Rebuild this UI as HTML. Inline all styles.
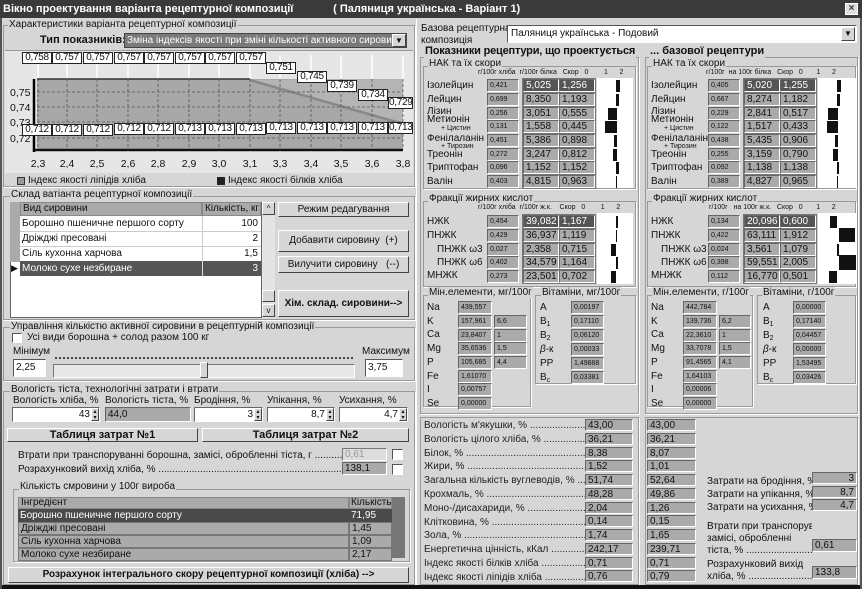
<!DOCTYPE html>
<html><head><meta charset="utf-8"><style>
*{box-sizing:border-box;margin:0;padding:0}
body{width:862px;height:589px;background:#d6d6d6;font-family:"Liberation Sans","DejaVu Sans",sans-serif;font-size:10px;color:#111;position:relative;overflow:hidden}
div,span{position:absolute;white-space:nowrap}
sub{font-size:7px;line-height:0;vertical-align:-2px}
.g{border:1px solid #999;box-shadow:1px 1px 0 #fff}
.gt{background:#d6d6d6;padding:0 1px;line-height:11px}
.f{background:#aaa;border:1px solid;border-color:#666 #fff #fff #666;line-height:11px;padding-left:2px;overflow:hidden}
.s{font-size:7px;line-height:11px}
.d{background:#555;color:#fff}
.w{background:#fff;border:1px solid;border-color:#666 #fff #fff #666;text-align:right;padding-right:9px;line-height:13px}
.b{background:#d6d6d6;border:1px solid;border-color:#fff #444 #444 #fff;text-align:center}
.bb{font-weight:bold}
.lb{background:#fff;border:1px solid #222;font-size:10px;line-height:10px;width:30px;height:12px;text-align:center;letter-spacing:-0.3px}
.bar{background:#111}
.dots{overflow:hidden}
</style></head><body>
<!-- title -->
<div style="left:0;top:0;width:862px;height:18px;background:#3a3a3a;color:#fff;font-weight:bold;font-size:11px;line-height:18px;padding-left:3px">Вікно проектування варіанта рецептурної композиції&nbsp;&nbsp;&nbsp;&nbsp;&nbsp;&nbsp;&nbsp;&nbsp;&nbsp;&nbsp;&nbsp;&nbsp;&nbsp;( Паляниця українська - Варіант 1)</div>
<div style="left:845px;top:3px;width:13px;height:12px;background:#ddd;border:1px solid #fff;color:#333;font-size:10px;line-height:10px;text-align:center;font-weight:bold">×</div>

<!-- LEFT: chart group -->
<div class="g" style="left:3px;top:25px;width:412px;height:162px"></div>
<div class="gt" style="left:8px;top:19px">Характеристики варіанта рецептурної композиції</div>
<div class="bb" style="left:40px;top:34px;font-size:11px">Тип показників:</div>
<div style="left:124px;top:33px;width:283px;height:15px;background:#7a7a7a;border:1px solid #444;color:#fff;line-height:13px;padding-left:2px;overflow:hidden">Зміна індексів якості при зміні кількості активного сировини 0</div>
<div class="b" style="left:392px;top:34px;width:14px;height:13px;font-size:8px;line-height:11px">▼</div>
<div style="left:5px;top:50px;width:408px;height:123px;background:#e6e6e6;border-top:1px solid #999"></div>
<svg style="position:absolute;left:0;top:0" width="420" height="180">
<g stroke="#fff" stroke-width="1.5">
<line x1="38" y1="55" x2="38" y2="152"/><line x1="67" y1="55" x2="67" y2="152"/><line x1="97" y1="55" x2="97" y2="152"/><line x1="128" y1="55" x2="128" y2="152"/><line x1="158" y1="55" x2="158" y2="152"/><line x1="189" y1="55" x2="189" y2="152"/><line x1="219" y1="55" x2="219" y2="152"/><line x1="250" y1="55" x2="250" y2="152"/><line x1="280" y1="55" x2="280" y2="152"/><line x1="311" y1="55" x2="311" y2="152"/><line x1="341" y1="55" x2="341" y2="152"/><line x1="372" y1="55" x2="372" y2="152"/><line x1="403" y1="55" x2="403" y2="152"/></g>
<rect x="37" y="79" width="366" height="71" fill="#a8a8a8"/>
<polygon points="250,80 403,122 403,79" fill="#b4b4b4"/>
<line x1="37" y1="79" x2="250" y2="79" stroke="#333" stroke-width="1.5"/>
<line x1="250" y1="80" x2="403" y2="124" stroke="#888" stroke-width="2.5"/>
<g stroke="#555" stroke-dasharray="3,2" stroke-width="0.8">
<line x1="37" y1="92" x2="403" y2="92"/><line x1="37" y1="107" x2="403" y2="107"/><line x1="37" y1="122" x2="403" y2="122"/><line x1="37" y1="138" x2="403" y2="138"/>
<line x1="38" y1="79" x2="38" y2="150"/><line x1="67" y1="79" x2="67" y2="150"/><line x1="97" y1="79" x2="97" y2="150"/><line x1="128" y1="79" x2="128" y2="150"/><line x1="158" y1="79" x2="158" y2="150"/><line x1="189" y1="79" x2="189" y2="150"/><line x1="219" y1="79" x2="219" y2="150"/><line x1="250" y1="79" x2="250" y2="150"/><line x1="280" y1="79" x2="280" y2="150"/><line x1="311" y1="79" x2="311" y2="150"/><line x1="341" y1="79" x2="341" y2="150"/><line x1="372" y1="79" x2="372" y2="150"/><line x1="403" y1="79" x2="403" y2="150"/></g>
<line x1="34" y1="79" x2="34" y2="152" stroke="#000" stroke-width="2.5"/>
<line x1="34" y1="150" x2="403" y2="150" stroke="#111" stroke-width="2.5"/>
<g font-family="Liberation Sans" font-size="10.5" fill="#111">
<text x="10" y="96">0,75</text><text x="10" y="111">0,74</text><text x="10" y="126">0,73</text><text x="10" y="142">0,72</text>
<g text-anchor="middle"><text x="38" y="167">2,3</text><text x="67" y="167">2,4</text><text x="97" y="167">2,5</text><text x="128" y="167">2,6</text><text x="158" y="167">2,8</text><text x="189" y="167">2,9</text><text x="219" y="167">3,0</text><text x="250" y="167">3,1</text><text x="280" y="167">3,3</text><text x="311" y="167">3,4</text><text x="341" y="167">3,5</text><text x="372" y="167">3,6</text><text x="403" y="167">3,8</text></g></g>
</svg>
<div class="lb" style="left:22px;top:52px">0,758</div><div class="lb" style="left:52px;top:52px">0,757</div><div class="lb" style="left:83px;top:52px">0,757</div><div class="lb" style="left:114px;top:52px">0,757</div><div class="lb" style="left:144px;top:52px">0,757</div><div class="lb" style="left:175px;top:52px">0,757</div><div class="lb" style="left:205px;top:52px">0,757</div><div class="lb" style="left:236px;top:52px">0,757</div>
<div class="lb" style="left:266px;top:62px">0,751</div><div class="lb" style="left:297px;top:71px">0,745</div><div class="lb" style="left:327px;top:80px">0,739</div><div class="lb" style="left:358px;top:89px">0,734</div><div class="lb" style="left:388px;top:97px;width:25px;overflow:hidden">0,729</div>
<div class="lb" style="left:22px;top:124px">0,712</div><div class="lb" style="left:52px;top:124px">0,712</div><div class="lb" style="left:83px;top:124px">0,712</div><div class="lb" style="left:114px;top:123px">0,712</div><div class="lb" style="left:144px;top:123px">0,712</div><div class="lb" style="left:175px;top:123px">0,713</div><div class="lb" style="left:205px;top:123px">0,713</div><div class="lb" style="left:236px;top:123px">0,713</div><div class="lb" style="left:266px;top:122px">0,713</div><div class="lb" style="left:297px;top:122px">0,713</div><div class="lb" style="left:327px;top:122px">0,713</div><div class="lb" style="left:358px;top:122px">0,713</div><div class="lb" style="left:388px;top:122px;width:25px;overflow:hidden">0,713</div>
<div style="left:17px;top:177px;width:8px;height:8px;background:#999;border:1px solid #333"></div>
<div style="left:28px;top:175px">Індекс якості лiпідів хліба</div>
<div style="left:217px;top:177px;width:8px;height:8px;background:#222"></div>
<div style="left:228px;top:175px">Індекс якості білків хліба</div>

<!-- Склад -->
<div class="g" style="left:3px;top:196px;width:412px;height:124px"></div>
<div class="gt" style="left:10px;top:189px">Склад ватіанта рецептурної композиції</div>
<div style="left:10px;top:202px;width:252px;height:116px;background:#fff;border:1px solid #666"></div>
<div style="left:10px;top:202px;width:10px;height:60px;background:#aaa"></div>
<div style="left:20px;top:202px;width:182px;height:14px;background:#aaa;border:1px solid #888;padding-left:2px;line-height:12px">Вид сировини</div>
<div style="left:202px;top:202px;width:59px;height:14px;background:#aaa;border:1px solid #888;padding-left:2px;line-height:12px;overflow:hidden">Кількість, кг</div>
<div style="left:22px;top:216px;line-height:15px">Борошно пшеничне першого сорту</div><div style="left:202px;top:216px;width:56px;text-align:right;line-height:15px">100</div>
<div style="left:20px;top:231px;width:241px;border-top:1px solid #ccc"></div>
<div style="left:22px;top:231px;line-height:15px">Дріжджі пресовані</div><div style="left:202px;top:231px;width:56px;text-align:right;line-height:15px">2</div>
<div style="left:20px;top:246px;width:241px;border-top:1px solid #ccc"></div>
<div style="left:22px;top:246px;line-height:15px">Сіль кухонна харчова</div><div style="left:202px;top:246px;width:56px;text-align:right;line-height:15px">1,5</div>
<div style="left:202px;top:216px;height:46px;border-left:1px solid #ccc"></div>
<div style="left:11px;top:261px;width:9px;height:15px;font-size:9px;line-height:15px">▶</div>
<div class="d" style="left:20px;top:261px;width:182px;height:15px;line-height:15px;padding-left:2px">Молоко сухе незбиране</div>
<div class="d" style="left:202px;top:261px;width:59px;height:15px;line-height:15px;text-align:right;padding-right:3px;border-left:1px solid #ddd">3</div>
<div style="left:262px;top:202px;width:13px;height:116px;background:#e4e4e4"></div>
<div class="b" style="left:262px;top:202px;width:13px;height:13px;font-size:8px;line-height:11px">^</div>
<div class="b" style="left:262px;top:290px;width:13px;height:12px"></div>
<div class="b" style="left:262px;top:304px;width:13px;height:13px;font-size:8px;line-height:11px">v</div>
<div class="b" style="left:278px;top:202px;width:131px;height:15px;line-height:13px">Режим редагування</div>
<div class="b" style="left:278px;top:230px;width:131px;height:22px;line-height:20px">Добавити сировину&nbsp; (+)</div>
<div class="b" style="left:278px;top:256px;width:131px;height:17px;line-height:15px">Вилучити сировину&nbsp;&nbsp; (--)</div>
<div class="b bb" style="left:278px;top:290px;width:131px;height:27px;line-height:25px">Хім. склад. сировини--&gt;</div>

<!-- Управління -->
<div class="g" style="left:3px;top:327px;width:412px;height:54px"></div>
<div class="gt" style="left:10px;top:321px">Управління кількістю активної сировини в рецептурній композиції</div>
<div style="left:12px;top:333px;width:10px;height:10px;background:#fff;border:1px solid;border-color:#555 #fff #fff #555"></div>
<div style="left:27px;top:332px">Усі види борошна + солод разом 100 кг</div>
<div style="left:13px;top:346px">Мінімум</div>
<div style="left:362px;top:346px">Максимум</div>
<div style="left:13px;top:359px;width:33px;height:18px;background:#fff;border:1px solid;border-color:#555 #fff #fff #555;line-height:15px;padding-left:2px">2,25</div>
<div style="left:365px;top:359px;width:38px;height:18px;background:#fff;border:1px solid;border-color:#555 #fff #fff #555;line-height:15px;padding-left:2px">3,75</div>
<div style="left:55px;top:357px;width:298px;border-top:2px dotted #444"></div>
<div style="left:53px;top:364px;width:302px;height:14px;background:#e8e8e8;border:1px solid;border-color:#777 #fff #fff #777"></div>
<div class="b" style="left:200px;top:362px;width:8px;height:16px"></div>

<!-- Вологість -->
<div class="g" style="left:3px;top:391px;width:412px;height:194px"></div>
<div class="gt" style="left:10px;top:384px">Вологість тіста, технологічні затрати і втрати</div>
<div style="left:13px;top:395px">Вологість хліба, %</div><div style="left:105px;top:395px">Вологість тіста, %</div><div style="left:194px;top:395px">Бродіння, %</div><div style="left:267px;top:395px">Упікання, %</div><div style="left:339px;top:395px">Усихання, %</div>
<div class="w" style="left:12px;top:407px;width:88px;height:15px">43</div>
<div class="f" style="left:105px;top:407px;width:86px;height:15px;line-height:13px">44,0</div>
<div class="w" style="left:194px;top:407px;width:69px;height:15px">3</div>
<div class="w" style="left:267px;top:407px;width:68px;height:15px">8,7</div>
<div class="w" style="left:339px;top:407px;width:69px;height:15px">4,7</div>
<div class="b" style="left:91px;top:408px;width:8px;height:13px;font-size:6px;line-height:6px">▴<br>▾</div>
<div class="b" style="left:254px;top:408px;width:8px;height:13px;font-size:6px;line-height:6px">▴<br>▾</div>
<div class="b" style="left:326px;top:408px;width:8px;height:13px;font-size:6px;line-height:6px">▴<br>▾</div>
<div class="b" style="left:399px;top:408px;width:8px;height:13px;font-size:6px;line-height:6px">▴<br>▾</div>
<div class="b bb" style="left:7px;top:428px;width:191px;height:14px;line-height:12px;font-size:11px">Таблиця затрат №1</div>
<div class="b bb" style="left:202px;top:428px;width:207px;height:14px;line-height:12px;font-size:11px">Таблиця затрат №2</div>
<div class="dots" style="left:18px;top:450px;width:324px">Втрати при транспоруванні борошна, замісі, обробленні тіста, г ..........................................</div>
<div style="left:342px;top:448px;width:45px;height:13px;background:#ddd;border:1px solid;border-color:#777 #fff #fff #777;color:#999;line-height:11px;padding-left:2px">0,61</div>
<div style="left:392px;top:449px;width:11px;height:11px;background:#fff;border:1px solid;border-color:#555 #fff #fff #555"></div>
<div class="dots" style="left:18px;top:464px;width:324px">Розрахунковий вихід хліба, % .........................................................................................</div>
<div class="f" style="left:342px;top:462px;width:45px;height:13px">138,1</div>
<div style="left:392px;top:464px;width:11px;height:11px;background:#fff;border:1px solid;border-color:#555 #fff #fff #555"></div>
<div class="g" style="left:13px;top:489px;width:397px;height:73px"></div>
<div class="gt" style="left:19px;top:481px">Кількість смровини у 100г вироба</div>
<div style="left:18px;top:497px;width:387px;height:61px;background:#777"></div>
<div style="left:18px;top:497px;width:331px;height:12px;background:#aaa;border:1px solid #888;line-height:10px;padding-left:2px">Інгредієнт</div>
<div style="left:349px;top:497px;width:43px;height:12px;background:#aaa;border:1px solid #888;line-height:10px;padding-left:1px;overflow:hidden">Кількість</div>
<div class="d" style="left:18px;top:509px;width:331px;height:13px;line-height:13px;padding-left:2px;background:#4a4a4a">Борошно пшеничне першого сорту</div>
<div class="d" style="left:349px;top:509px;width:43px;height:13px;line-height:13px;padding-left:2px;background:#4a4a4a">71,95</div>
<div style="left:18px;top:522px;width:331px;height:13px;line-height:12px;padding-left:2px;background:#aaa;border:1px solid #777">Дріжджі пресовані</div><div style="left:349px;top:522px;width:43px;height:13px;line-height:12px;padding-left:2px;background:#aaa;border:1px solid #777">1,45</div>
<div style="left:18px;top:535px;width:331px;height:13px;line-height:12px;padding-left:2px;background:#aaa;border:1px solid #777">Сіль кухонна харчова</div><div style="left:349px;top:535px;width:43px;height:13px;line-height:12px;padding-left:2px;background:#aaa;border:1px solid #777">1,09</div>
<div style="left:18px;top:548px;width:331px;height:13px;line-height:12px;padding-left:2px;background:#aaa;border:1px solid #777">Молоко сухе незбиране</div><div style="left:349px;top:548px;width:43px;height:13px;line-height:12px;padding-left:2px;background:#aaa;border:1px solid #777">2,17</div>
<div class="b bb" style="left:8px;top:567px;width:401px;height:16px;line-height:14px">Розрахунок інтегрального скору рецептурної композиції (хліба) --&gt;</div>

<!-- RIGHT top -->
<div style="left:416px;top:19px;height:570px;border-left:1px solid #fff"></div>
<div style="left:421px;top:23px;line-height:12px">Базова рецептурна<br>композиція</div>
<div style="left:507px;top:25px;width:350px;height:18px;background:#fff;border:1px solid;border-color:#555 #fff #fff #555;line-height:15px;padding-left:3px">Паляниця українська - Подовий</div>
<div class="b" style="left:841px;top:27px;width:14px;height:14px;font-size:8px;line-height:12px">▼</div>
<div class="g" style="left:420px;top:57px;width:219px;height:357px"></div>
<div class="g" style="left:645px;top:57px;width:213px;height:357px"></div>
<div class="gt bb" style="left:424px;top:45px;font-size:11px;line-height:13px;letter-spacing:-0.2px">Показники рецептури, що проектується</div>
<div class="gt bb" style="left:649px;top:45px;font-size:11px;line-height:13px">... базової рецептури</div>

<!-- NAK left -->
<div class="g" style="left:423px;top:66px;width:213px;height:123px"></div>
<div class="gt" style="left:428px;top:58px">НАК та їх скори</div>
<div class="s" style="left:478px;top:67px">г/100г хліба&nbsp; г/100г білка&nbsp;&nbsp; Скор&nbsp;&nbsp; 0&nbsp;&nbsp;&nbsp;&nbsp;&nbsp;&nbsp;&nbsp; 1&nbsp;&nbsp;&nbsp;&nbsp;&nbsp; 2</div>
<div class="g" style="left:647px;top:66px;width:209px;height:123px"></div>
<div class="gt" style="left:652px;top:58px">НАК та їх скори</div>
<div class="s" style="left:706px;top:67px">г/100г&nbsp; на 100г білка&nbsp;&nbsp; Скор&nbsp;&nbsp; 0&nbsp;&nbsp;&nbsp;&nbsp;&nbsp;&nbsp; 1&nbsp;&nbsp;&nbsp;&nbsp;&nbsp; 2</div>
<div style="left:597px;top:78px;width:36px;height:110px;background:#fff"></div>
<div style="left:818px;top:78px;width:38px;height:110px;background:#fff"></div>

<div style="left:427px;top:79px;line-height:13px">Ізолейцин</div>
<div style="left:427px;top:93px;line-height:13px">Лейцин</div>
<div style="left:427px;top:106px;line-height:12px">Лізин</div>
<div style="left:427px;top:114px;line-height:12px">Метионін</div>
<div style="left:441px;top:124px;font-size:7px;line-height:10px">+ Цистин</div>
<div style="left:427px;top:133px;line-height:12px">Фенілаланін</div>
<div style="left:441px;top:142px;font-size:7px;line-height:10px">+ Тирозин</div>
<div style="left:427px;top:148px;line-height:13px">Треонін</div>
<div style="left:427px;top:161px;line-height:13px">Триптофан</div>
<div style="left:427px;top:175px;line-height:13px">Валін</div>

<div style="left:651px;top:79px;line-height:13px">Ізолейцин</div>
<div style="left:651px;top:93px;line-height:13px">Лейцин</div>
<div style="left:651px;top:106px;line-height:12px">Лізин</div>
<div style="left:651px;top:114px;line-height:12px">Метионін</div>
<div style="left:664px;top:124px;font-size:7px;line-height:10px">+ Цистин</div>
<div style="left:651px;top:133px;line-height:12px">Фенілаланін</div>
<div style="left:664px;top:142px;font-size:7px;line-height:10px">+ Тирозин</div>
<div style="left:651px;top:148px;line-height:13px">Треонін</div>
<div style="left:651px;top:161px;line-height:13px">Триптофан</div>
<div style="left:651px;top:175px;line-height:13px">Валін</div>

<div class="f s" style="left:487px;top:79px;width:32px;height:13px">0,421</div>
<div class="f s" style="left:487px;top:93px;width:32px;height:13px">0,699</div>
<div class="f s" style="left:487px;top:107px;width:32px;height:13px">0,256</div>
<div class="f s" style="left:487px;top:120px;width:32px;height:13px">0,131</div>
<div class="f s" style="left:487px;top:134px;width:32px;height:13px">0,451</div>
<div class="f s" style="left:487px;top:148px;width:32px;height:13px">0,272</div>
<div class="f s" style="left:487px;top:161px;width:32px;height:13px">0,096</div>
<div class="f s" style="left:487px;top:175px;width:32px;height:13px">0,403</div>
<div style="left:522px;top:78px;width:74px;height:111px;background:#777"></div>
<div class="f d" style="left:523px;top:79px;width:36px;height:13px">5,025</div><div class="f d" style="left:559px;top:79px;width:36px;height:13px">1,256</div>
<div class="f" style="left:523px;top:93px;width:36px;height:13px">8,350</div><div class="f" style="left:559px;top:93px;width:36px;height:13px">1,193</div>
<div class="f" style="left:523px;top:107px;width:36px;height:13px">3,051</div><div class="f" style="left:559px;top:107px;width:36px;height:13px">0,555</div>
<div class="f" style="left:523px;top:120px;width:36px;height:13px">1,558</div><div class="f" style="left:559px;top:120px;width:36px;height:13px">0,445</div>
<div class="f" style="left:523px;top:134px;width:36px;height:13px">5,386</div><div class="f" style="left:559px;top:134px;width:36px;height:13px">0,898</div>
<div class="f" style="left:523px;top:148px;width:36px;height:13px">3,247</div><div class="f" style="left:559px;top:148px;width:36px;height:13px">0,812</div>
<div class="f" style="left:523px;top:161px;width:36px;height:13px">1,152</div><div class="f" style="left:559px;top:161px;width:36px;height:13px">1,152</div>
<div class="f" style="left:523px;top:175px;width:36px;height:13px">4,815</div><div class="f" style="left:559px;top:175px;width:36px;height:13px">0,963</div>
<div class="bar" style="left:616px;top:80px;width:4px;height:12px"></div>
<div class="bar" style="left:616px;top:94px;width:3px;height:12px"></div>
<div class="bar" style="left:608px;top:108px;width:9px;height:12px"></div>
<div class="bar" style="left:605px;top:121px;width:12px;height:12px"></div>
<div class="bar" style="left:614px;top:135px;width:3px;height:12px"></div>
<div class="bar" style="left:613px;top:149px;width:4px;height:12px"></div>
<div class="bar" style="left:616px;top:162px;width:3px;height:12px"></div>
<div class="bar" style="left:616px;top:176px;width:1px;height:12px"></div>
<div class="f s" style="left:708px;top:79px;width:32px;height:13px">0,405</div>
<div class="f s" style="left:708px;top:93px;width:32px;height:13px">0,667</div>
<div class="f s" style="left:708px;top:107px;width:32px;height:13px">0,229</div>
<div class="f s" style="left:708px;top:120px;width:32px;height:13px">0,122</div>
<div class="f s" style="left:708px;top:134px;width:32px;height:13px">0,438</div>
<div class="f s" style="left:708px;top:148px;width:32px;height:13px">0,255</div>
<div class="f s" style="left:708px;top:161px;width:32px;height:13px">0,092</div>
<div class="f s" style="left:708px;top:175px;width:32px;height:13px">0,389</div>
<div style="left:743px;top:78px;width:74px;height:111px;background:#777"></div>
<div class="f d" style="left:744px;top:79px;width:36px;height:13px">5,020</div><div class="f d" style="left:780px;top:79px;width:36px;height:13px">1,255</div>
<div class="f" style="left:744px;top:93px;width:36px;height:13px">8,274</div><div class="f" style="left:780px;top:93px;width:36px;height:13px">1,182</div>
<div class="f" style="left:744px;top:107px;width:36px;height:13px">2,841</div><div class="f" style="left:780px;top:107px;width:36px;height:13px">0,517</div>
<div class="f" style="left:744px;top:120px;width:36px;height:13px">1,517</div><div class="f" style="left:780px;top:120px;width:36px;height:13px">0,433</div>
<div class="f" style="left:744px;top:134px;width:36px;height:13px">5,435</div><div class="f" style="left:780px;top:134px;width:36px;height:13px">0,906</div>
<div class="f" style="left:744px;top:148px;width:36px;height:13px">3,159</div><div class="f" style="left:780px;top:148px;width:36px;height:13px">0,790</div>
<div class="f" style="left:744px;top:161px;width:36px;height:13px">1,138</div><div class="f" style="left:780px;top:161px;width:36px;height:13px">1,138</div>
<div class="f" style="left:744px;top:175px;width:36px;height:13px">4,827</div><div class="f" style="left:780px;top:175px;width:36px;height:13px">0,965</div>
<div class="bar" style="left:837px;top:80px;width:4px;height:12px"></div>
<div class="bar" style="left:837px;top:94px;width:3px;height:12px"></div>
<div class="bar" style="left:828px;top:108px;width:10px;height:12px"></div>
<div class="bar" style="left:827px;top:121px;width:11px;height:12px"></div>
<div class="bar" style="left:835px;top:135px;width:3px;height:12px"></div>
<div class="bar" style="left:833px;top:149px;width:5px;height:12px"></div>
<div class="bar" style="left:837px;top:162px;width:2px;height:12px"></div>
<div class="bar" style="left:837px;top:176px;width:1px;height:12px"></div>

<!-- Fatty acids -->
<div class="g" style="left:423px;top:201px;width:213px;height:86px"></div>
<div class="gt" style="left:428px;top:193px">Фракції жирних кислот</div>
<div class="s" style="left:478px;top:202px">г/100г хліба&nbsp; г/100г ж.к.&nbsp;&nbsp;&nbsp; Скор&nbsp;&nbsp; 0&nbsp;&nbsp;&nbsp;&nbsp;&nbsp;&nbsp;&nbsp; 1&nbsp;&nbsp;&nbsp;&nbsp;&nbsp; 2</div>
<div class="g" style="left:647px;top:201px;width:209px;height:86px"></div>
<div class="gt" style="left:652px;top:193px">Фракції жирних кислот</div>
<div class="s" style="left:709px;top:202px">г/100г&nbsp;&nbsp; на 100г ж.к.&nbsp;&nbsp; Скор&nbsp;&nbsp; 0&nbsp;&nbsp;&nbsp;&nbsp;&nbsp;&nbsp; 1&nbsp;&nbsp;&nbsp;&nbsp;&nbsp; 2</div>
<div style="left:597px;top:213px;width:36px;height:71px;background:#fff"></div>
<div style="left:818px;top:213px;width:38px;height:71px;background:#fff"></div>
<div style="left:427px;top:215px;line-height:14px">НЖК</div><div style="left:427px;top:229px;line-height:14px">ПНЖК</div><div style="left:437px;top:243px;line-height:14px">ПНЖК ω3</div><div style="left:437px;top:256px;line-height:14px">ПНЖК ω6</div><div style="left:427px;top:269px;line-height:14px">МНЖК</div>
<div style="left:651px;top:215px;line-height:14px">НЖК</div><div style="left:651px;top:229px;line-height:14px">ПНЖК</div><div style="left:661px;top:243px;line-height:14px">ПНЖК ω3</div><div style="left:661px;top:256px;line-height:14px">ПНЖК ω6</div><div style="left:651px;top:269px;line-height:14px">МНЖК</div>
<div class="f s" style="left:487px;top:215px;width:32px;height:13px">0,454</div>
<div class="f s" style="left:487px;top:229px;width:32px;height:13px">0,429</div>
<div class="f s" style="left:487px;top:243px;width:32px;height:13px">0,027</div>
<div class="f s" style="left:487px;top:256px;width:32px;height:13px">0,402</div>
<div class="f s" style="left:487px;top:270px;width:32px;height:13px">0,273</div>
<div style="left:522px;top:214px;width:74px;height:70px;background:#777"></div>
<div class="f d" style="left:523px;top:215px;width:36px;height:13px">39,082</div><div class="f d" style="left:559px;top:215px;width:36px;height:13px">1,167</div>
<div class="f" style="left:523px;top:229px;width:36px;height:13px">36,937</div><div class="f" style="left:559px;top:229px;width:36px;height:13px">1,119</div>
<div class="f" style="left:523px;top:243px;width:36px;height:13px">2,358</div><div class="f" style="left:559px;top:243px;width:36px;height:13px">0,715</div>
<div class="f" style="left:523px;top:256px;width:36px;height:13px">34,579</div><div class="f" style="left:559px;top:256px;width:36px;height:13px">1,164</div>
<div class="f" style="left:523px;top:270px;width:36px;height:13px">23,501</div><div class="f" style="left:559px;top:270px;width:36px;height:13px">0,702</div>
<div class="bar" style="left:616px;top:216px;width:2px;height:12px"></div>
<div class="bar" style="left:616px;top:230px;width:1px;height:12px"></div>
<div class="bar" style="left:611px;top:244px;width:5px;height:12px"></div>
<div class="bar" style="left:616px;top:257px;width:2px;height:12px"></div>
<div class="bar" style="left:611px;top:271px;width:5px;height:12px"></div>
<div class="f s" style="left:708px;top:215px;width:32px;height:13px">0,134</div>
<div class="f s" style="left:708px;top:229px;width:32px;height:13px">0,422</div>
<div class="f s" style="left:708px;top:243px;width:32px;height:13px">0,024</div>
<div class="f s" style="left:708px;top:256px;width:32px;height:13px">0,398</div>
<div class="f s" style="left:708px;top:270px;width:32px;height:13px">0,112</div>
<div style="left:743px;top:214px;width:74px;height:70px;background:#777"></div>
<div class="f d" style="left:744px;top:215px;width:36px;height:13px">20,096</div><div class="f d" style="left:780px;top:215px;width:36px;height:13px">0,600</div>
<div class="f" style="left:744px;top:229px;width:36px;height:13px">63,111</div><div class="f" style="left:780px;top:229px;width:36px;height:13px">1,912</div>
<div class="f" style="left:744px;top:243px;width:36px;height:13px">3,561</div><div class="f" style="left:780px;top:243px;width:36px;height:13px">1,079</div>
<div class="f" style="left:744px;top:256px;width:36px;height:13px">59,551</div><div class="f" style="left:780px;top:256px;width:36px;height:13px">2,005</div>
<div class="f" style="left:744px;top:270px;width:36px;height:13px">16,770</div><div class="f" style="left:780px;top:270px;width:36px;height:13px">0,501</div>
<div class="bar" style="left:830px;top:216px;width:7px;height:12px"></div>
<div class="bar" style="left:839px;top:228px;width:16px;height:14px"></div>
<div class="bar" style="left:837px;top:244px;width:2px;height:12px"></div>
<div class="bar" style="left:839px;top:255px;width:17px;height:15px"></div>
<div class="bar" style="left:829px;top:271px;width:8px;height:12px"></div>

<!-- Minerals left -->
<div class="g" style="left:423px;top:295px;width:108px;height:112px"></div>
<div class="gt" style="left:428px;top:287px">Мін.елементи, мг/100г</div>
<div class="g" style="left:535px;top:295px;width:101px;height:89px"></div>
<div class="gt" style="left:541px;top:287px">Вітаміни, мг/100г</div>
<div style="left:427px;top:301px;line-height:13.7px">Na<br>K<br>Ca<br>Mg<br>P<br>Fe<br>I<br>Se</div>
<div class="f s" style="left:458px;top:301px;width:34px;height:13px">439,557</div>
<div class="f s" style="left:458px;top:315px;width:34px;height:13px">157,961</div>
<div class="f s" style="left:458px;top:329px;width:34px;height:13px">23,8407</div>
<div class="f s" style="left:458px;top:342px;width:34px;height:13px">35,6536</div>
<div class="f s" style="left:458px;top:356px;width:34px;height:13px">105,685</div>
<div class="f s" style="left:458px;top:370px;width:34px;height:13px">1,61070</div>
<div class="f s" style="left:458px;top:383px;width:34px;height:13px">0,00757</div>
<div class="f s" style="left:458px;top:397px;width:34px;height:13px">0,00000</div>
<div class="f s" style="left:494px;top:315px;width:33px;height:13px">6,6</div>
<div class="f s" style="left:494px;top:329px;width:33px;height:13px">1</div>
<div class="f s" style="left:494px;top:342px;width:33px;height:13px">1,5</div>
<div class="f s" style="left:494px;top:356px;width:33px;height:13px">4,4</div>
<div style="left:540px;top:301px;line-height:14px">A<br>B<sub>1</sub><br>B<sub>2</sub><br><i>β</i>-к<br>PP<br>B<sub>c</sub></div>
<div class="f s" style="left:571px;top:301px;width:33px;height:13px">0,00197</div>
<div class="f s" style="left:571px;top:315px;width:33px;height:13px">0,17110</div>
<div class="f s" style="left:571px;top:329px;width:33px;height:13px">0,06120</div>
<div class="f s" style="left:571px;top:343px;width:33px;height:13px">0,00033</div>
<div class="f s" style="left:571px;top:357px;width:33px;height:13px">1,49888</div>
<div class="f s" style="left:571px;top:371px;width:33px;height:13px">0,03381</div>
<!-- Minerals right -->
<div class="g" style="left:647px;top:295px;width:106px;height:112px"></div>
<div class="gt" style="left:652px;top:287px">Мін.елементи, г/100г</div>
<div class="g" style="left:757px;top:295px;width:99px;height:89px"></div>
<div class="gt" style="left:762px;top:287px">Вітаміни, г/100г</div>
<div style="left:651px;top:301px;line-height:13.7px">Na<br>K<br>Ca<br>Mg<br>P<br>Fe<br>I<br>Se</div>
<div class="f s" style="left:683px;top:301px;width:34px;height:13px">442,784</div>
<div class="f s" style="left:683px;top:315px;width:34px;height:13px">139,736</div>
<div class="f s" style="left:683px;top:329px;width:34px;height:13px">22,3610</div>
<div class="f s" style="left:683px;top:342px;width:34px;height:13px">33,7078</div>
<div class="f s" style="left:683px;top:356px;width:34px;height:13px">91,4565</div>
<div class="f s" style="left:683px;top:370px;width:34px;height:13px">1,64103</div>
<div class="f s" style="left:683px;top:383px;width:34px;height:13px">0,00006</div>
<div class="f s" style="left:683px;top:397px;width:34px;height:13px">0,00000</div>
<div class="f s" style="left:719px;top:315px;width:32px;height:13px">6,2</div>
<div class="f s" style="left:719px;top:329px;width:32px;height:13px">1</div>
<div class="f s" style="left:719px;top:342px;width:32px;height:13px">1,5</div>
<div class="f s" style="left:719px;top:356px;width:32px;height:13px">4,1</div>
<div style="left:763px;top:301px;line-height:14px">A<br>B<sub>1</sub><br>B<sub>2</sub><br><i>β</i>-к<br>PP<br>B<sub>c</sub></div>
<div class="f s" style="left:793px;top:301px;width:33px;height:13px">0,00000</div>
<div class="f s" style="left:793px;top:315px;width:33px;height:13px">0,17140</div>
<div class="f s" style="left:793px;top:329px;width:33px;height:13px">0,04457</div>
<div class="f s" style="left:793px;top:343px;width:33px;height:13px">0,00000</div>
<div class="f s" style="left:793px;top:357px;width:33px;height:13px">1,53495</div>
<div class="f s" style="left:793px;top:371px;width:33px;height:13px">0,03426</div>

<!-- Bottom right -->
<div class="g" style="left:420px;top:417px;width:219px;height:168px"></div>
<div class="g" style="left:645px;top:417px;width:213px;height:168px"></div>
<div class="dots" style="left:424px;top:419px;width:161px;line-height:13.8px;color:#222">Вологість м'якушки, % ..................................<br>Вологість цілого хліба, % ..................................<br>Білок, % ...............................................................<br>Жири, % ...............................................................<br>Загальна кількість вуглеводів, % .......................<br>Крохмаль, % ........................................................<br>Моно-/дисахариди, % ..........................................<br>Клітковина, % ......................................................<br>Зола, % ..................................................................<br>Енергетична цінність, кКал ..............................<br>Індекс якості білків хліба ..................................<br>Індекс якості ліпідів хліба ..................................</div>
<div class="f" style="left:585px;top:419px;width:48px;height:12px">43,00</div>
<div class="f" style="left:585px;top:433px;width:48px;height:12px">36,21</div>
<div class="f" style="left:585px;top:447px;width:48px;height:12px">8,38</div>
<div class="f" style="left:585px;top:460px;width:48px;height:12px">1,52</div>
<div class="f" style="left:585px;top:474px;width:48px;height:12px">51,74</div>
<div class="f" style="left:585px;top:488px;width:48px;height:12px">48,28</div>
<div class="f" style="left:585px;top:502px;width:48px;height:12px">2,04</div>
<div class="f" style="left:585px;top:515px;width:48px;height:12px">0,14</div>
<div class="f" style="left:585px;top:529px;width:48px;height:12px">1,74</div>
<div class="f" style="left:585px;top:543px;width:48px;height:12px">242,17</div>
<div class="f" style="left:585px;top:557px;width:48px;height:12px">0,71</div>
<div class="f" style="left:585px;top:570px;width:48px;height:12px">0,76</div>
<div class="f" style="left:647px;top:419px;width:49px;height:12px">43,00</div>
<div class="f" style="left:647px;top:433px;width:49px;height:12px">36,21</div>
<div class="f" style="left:647px;top:447px;width:49px;height:12px">8,07</div>
<div class="f" style="left:647px;top:460px;width:49px;height:12px">1,01</div>
<div class="f" style="left:647px;top:474px;width:49px;height:12px">52,64</div>
<div class="f" style="left:647px;top:488px;width:49px;height:12px">49,86</div>
<div class="f" style="left:647px;top:502px;width:49px;height:12px">1,26</div>
<div class="f" style="left:647px;top:515px;width:49px;height:12px">0,15</div>
<div class="f" style="left:647px;top:529px;width:49px;height:12px">1,65</div>
<div class="f" style="left:647px;top:543px;width:49px;height:12px">239,71</div>
<div class="f" style="left:647px;top:557px;width:49px;height:12px">0,71</div>
<div class="f" style="left:647px;top:570px;width:49px;height:12px">0,79</div>
<div class="dots" style="left:707px;top:475px;width:105px;line-height:13px">Затрати на бродіння, % ......<br>Затрати на упікання, % ......<br>Затрати на усихання, % ......</div>
<div class="f" style="left:812px;top:472px;width:45px;height:12px;text-align:right;padding-right:2px">3</div>
<div class="f" style="left:812px;top:486px;width:45px;height:12px;text-align:right;padding-right:2px">8,7</div>
<div class="f" style="left:812px;top:499px;width:45px;height:12px;text-align:right;padding-right:2px">4,7</div>
<div class="dots" style="left:707px;top:521px;width:105px;line-height:12px">Втрати при транспоруванні,<br>замісі, обробленні<br>тіста, % ................................</div>
<div class="f" style="left:812px;top:539px;width:45px;height:13px">0,61</div>
<div class="dots" style="left:707px;top:559px;width:105px;line-height:12px">Розрахунковий вихід<br>хліба, % ...............................</div>
<div class="f" style="left:812px;top:566px;width:45px;height:13px">133,8</div>
<!-- frame -->
<div style="left:0;top:585px;width:862px;height:4px;background:#111"></div>
<div style="left:0;top:18px;width:2px;height:571px;background:#555"></div>
<div style="left:860px;top:18px;width:2px;height:571px;background:#555"></div>
</body></html>
